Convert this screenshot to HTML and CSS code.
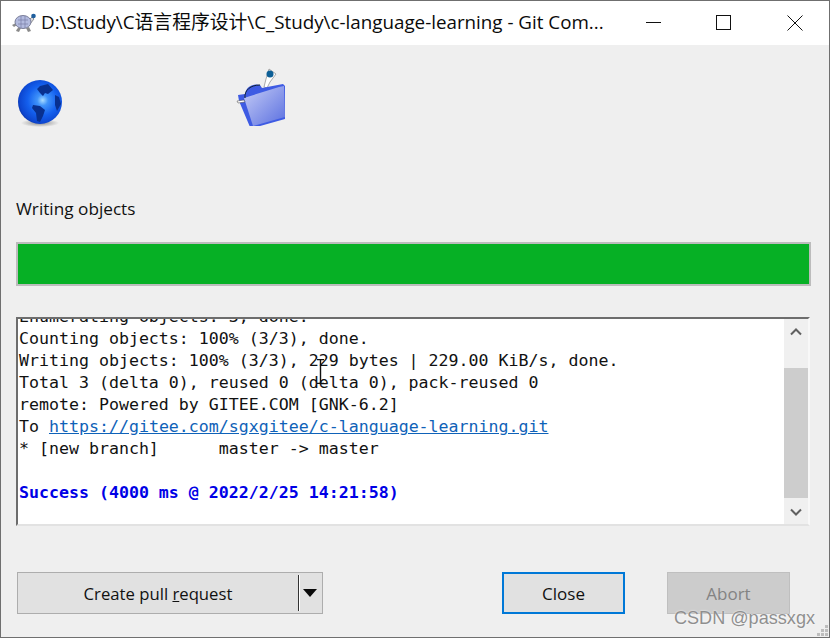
FILE: index.html
```html
<!DOCTYPE html>
<html lang="en">
<head>
<meta charset="utf-8">
<title>Git Command Progress</title>
<link rel="stylesheet" href="styles.css">
</head>
<body>
<div class="window">
  <header class="titlebar">
    <svg class="app-icon" width="24" height="20" viewBox="0 0 24 20">
      <path d="M0 12l4-2 1 2-3 2zM5 16l2-2 2 1-2 4-3-1zM14 15l3-1 2 4-3 1z" fill="#8a8a8a"/>
      <path d="M16 8l4-4 2 2-4 5z" fill="#d8d8de" stroke="#555" stroke-width=".6"/>
      <ellipse cx="11" cy="9" rx="8" ry="6.500" fill="#b3bbdf" stroke="#7b7f9a"/>
      <path d="M6 7h10M6 11h10M9 3v12M13 3v12" stroke="#7a80a6" stroke-width=".7"/>
      <circle cx="21.500" cy="3" r="2.300" fill="#1f5f9e"/>
    </svg>
    <span class="title">D:\Study\C语言程序设计\C_Study\c-language-learning - Git Com...</span>
    <div class="controls">
      <svg width="16" height="16" viewBox="0 0 16 16"><path d="M1 7.500h15" stroke="#111" fill="none"/></svg>
      <svg width="16" height="16" viewBox="0 0 16 16"><rect x=".5" y=".5" width="14" height="14" stroke="#111" fill="none"/></svg>
      <svg width="16" height="16" viewBox="0 0 16 16"><path d="M.5.5l15 15M15.500.5l-15 15" stroke="#111" fill="none"/></svg>
    </div>
  </header>
  <main class="content">
    <div class="icons">
      <svg class="globe" width="48" height="50" viewBox="0 0 48 50">
        <defs>
          <radialGradient id="g1" cx=".56" cy=".46" r=".62">
            <stop offset="0" stop-color="#a8dcff"/><stop offset=".2" stop-color="#3f93fa"/>
            <stop offset=".55" stop-color="#1460ee"/><stop offset=".85" stop-color="#0c45cf"/><stop offset="1" stop-color="#08288c"/>
          </radialGradient>
          <radialGradient id="g2"><stop offset="0" stop-color="#8c8c8c"/><stop offset="1" stop-color="#eee"/></radialGradient>
          <linearGradient id="f1" x1="0" y1="0" x2="1" y2="1">
            <stop offset="0" stop-color="#c6cdf6"/><stop offset="1" stop-color="#5a6fe0"/>
          </linearGradient>
        </defs>
        <ellipse cx="24" cy="45" rx="19" ry="4" fill="url(#g2)"/>
        <circle cx="24" cy="24" r="22" fill="url(#g1)"/>
        <path d="M24 8l8-2 5 6-5 4-3-1-2 3-3-3-3-4zM17 27l7 1 5 4-2 6-3 6-3-1-1-8-4-5zM39 17l4 2 2 7-4 7-2-6z" fill="#08308f"/>
      </svg>
      <svg class="folder" width="50" height="58" viewBox="0 0 50 58">
        <path d="M33 1l7 5-6 8-3 6-3-1 2-8z" fill="#fff" stroke="#777" stroke-width=".6"/>
        <circle cx="34" cy="6" r="3.500" fill="#0d5f96"/>
        <path d="M2 27l7-1c1-8 9-11 15-9l2 3 21-4 2 2v33l-32 9-3-1-11-26z" fill="#3e5be3"/>
        <path d="M8 30l35-11 5-1 1 31-32 9z" fill="url(#f1)"/>
        <path d="M9 30c-1-8 6-13 15-13" stroke="#123" fill="none"/>
        <path d="M1 33l7-1 1 2-7 1z" fill="#fff" stroke="#444" stroke-width=".5"/>
      </svg>
    </div>
    <div class="status">Writing objects</div>
    <div class="progress"></div>
    <section class="log">
      <div class="log-text">
        <div class="line">Enumerating objects: 3, done.</div>
        <div class="line">Counting objects: 100% (3/3), done.</div>
        <div class="line">Writing objects: 100% (3/3), 229 bytes | 229.00 KiB/s, done.</div>
        <div class="line">Total 3 (delta 0), reused 0 (delta 0), pack-reused 0</div>
        <div class="line">remote: Powered by GITEE.COM [GNK-6.2]</div>
        <div class="line">To <a class="link" href="#">https://gitee.com/sgxgitee/c-language-learning.git</a></div>
        <div class="line">* [new branch]      master -&gt; master</div>
        <div class="line">&nbsp;</div>
        <div class="line success">Success (4000 ms @ 2022/2/25 14:21:58)</div>
      </div>
      <div class="scrollbar">
        <svg class="arrow arrow-up" width="12" height="8" viewBox="0 0 12 8"><path d="M1 6.500l5-5 5 5" fill="none" stroke="#606060" stroke-width="2"/></svg>
        <div class="track"><div class="thumb"></div></div>
        <svg class="arrow arrow-down" width="12" height="8" viewBox="0 0 12 8"><path d="M1 1.500l5 5 5-5" fill="none" stroke="#606060" stroke-width="2"/></svg>
      </div>
      <svg class="ibeam" width="9" height="25" viewBox="0 0 9 25"><path d="M1 .5h7M1 24.500h7M4.500 1v23" stroke="#111" stroke-width="1.400" fill="none"/></svg>
    </section>
    <footer class="footer">
      <div class="btn split">
        <span class="split-label">Create pull <u>r</u>equest</span>
        <span class="split-sep"></span>
        <svg class="split-arrow" width="14" height="8" viewBox="0 0 14 8"><path d="M0 0h14L7 8z" fill="#0a0a0a"/></svg>
      </div>
      <div class="footer-right">
        <div class="btn default">Close</div>
        <div class="btn disabled">Abort</div>
      </div>
    </footer>
  </main>
  <div class="watermark">CSDN @passxgx</div>
  <svg class="grip" width="11" height="11" viewBox="0 0 11 11"><path d="M8 0h3v3H8zM4 4h3v3H4zM8 4h3v3H8zM0 8h3v3H0zM4 8h3v3H4zM8 8h3v3H8z" fill="#bdbdbd"/></svg>
</div>
</body>
</html>
```
FILE: styles.css
```css
html, body {
  margin: 0;
  padding: 0;
}
body {
  width: 830px;
  height: 638px;
  overflow: hidden;
  font-family: "Open Sans", "Noto Sans CJK SC", sans-serif;
  color: #111;
}
.window {
  position: relative;
  box-sizing: border-box;
  width: 830px;
  height: 638px;
  border: 1px solid #6f6f6f;
  background: #efefef;
  display: flex;
  flex-direction: column;
}
.titlebar {
  height: 44px;
  background: #fff;
  display: flex;
  align-items: center;
  padding-left: 11px;
  flex: none;
}
.app-icon {
  flex: none;
  margin-right: 5px;
}
.title {
  font-size: 18.800px;
  line-height: 24px;
  margin-top: -2px;
  white-space: nowrap;
  width: 570px;
  overflow: hidden;
  color: #0a0a0a;
}
.controls {
  margin-left: auto;
  display: flex;
  gap: 55px;
  padding-right: 26px;
}
.content {
  flex: 1;
  display: flex;
  flex-direction: column;
  padding: 0 18px 0 15px;
  min-height: 0;
}
.icons {
  height: 106px;
  position: relative;
  display: grid;
  grid-template-columns: 220px 50px;
  align-items: start;
}
.globe {
  margin-top: 33px;
}
.folder {
  margin-top: 23px;
}
.status {
  font-size: 17.200px;
  line-height: 22px;
  margin-top: 47px;
}
.progress {
  box-sizing: border-box;
  height: 44px;
  margin-top: 22px;
  width: 795px;
  background: #06b025;
  border: 2px solid #bcbcbc;
}
.log {
  position: relative;
  box-sizing: border-box;
  width: 794px;
  height: 209px;
  margin-top: 31px;
  background: #fff;
  border-style: solid;
  border-width: 2px 2px 2px 2px;
  border-color: #6d6d6d #f8f8f8 #e2e2e2 #6d6d6d;
  display: flex;
  overflow: hidden;
}
.log-text {
  flex: 1;
  min-width: 0;
  display: flex;
  flex-direction: column;
  justify-content: flex-end;
  padding: 0 0 20px 1px;
  font-family: "DejaVu Sans Mono", monospace;
  font-size: 16.600px;
  line-height: 22px;
  color: #111;
}
.line {
  white-space: pre;
  flex: none;
}
.link {
  color: #0f62b8;
}
.success {
  color: #0000e6;
  font-weight: bold;
}
.scrollbar {
  width: 24px;
  flex: none;
  background: #f0f0f0;
  display: flex;
  flex-direction: column;
  align-items: center;
}
.arrow {
  flex: none;
}
.arrow-up {
  margin: 9px 0;
}
.arrow-down {
  margin: 10px 0 8px;
}
.track {
  flex: 1;
  width: 100%;
  display: flex;
  align-items: flex-end;
}
.thumb {
  width: 100%;
  height: 130px;
  background: #cdcdcd;
}
.ibeam {
  position: absolute;
  left: 298px;
  top: 40px;
}
.footer {
  display: flex;
  justify-content: space-between;
  margin-top: 46px;
  padding-left: 1px;
  width: 773px;
}
.footer-right {
  display: flex;
  gap: 42px;
}
.btn {
  box-sizing: border-box;
  height: 42px;
  width: 123px;
  display: flex;
  align-items: center;
  justify-content: center;
  font-size: 17px;
  background: #e1e1e1;
  border: 1px solid #adadad;
  color: #111;
}
.split {
  width: 306px;
  justify-content: flex-start;
  font-size: 16.700px;
}
.split-label {
  width: 280px;
  text-align: center;
  flex: none;
}
.split-sep {
  width: 1px;
  height: 36px;
  background: #333;
  border-right: 1px solid #fff;
  flex: none;
}
.split-arrow {
  margin-left: 3px;
  flex: none;
}
.default {
  border: 2px solid #0078d7;
}
.disabled {
  background: #cccccc;
  border-color: #bfbfbf;
  color: #838383;
}
.watermark {
  position: absolute;
  right: 14px;
  bottom: 9px;
  font-family: "Liberation Sans", sans-serif;
  font-size: 18.100px;
  line-height: 20px;
  color: #8f8f8f;
  text-shadow: 0 0 2px #fff;
}
.grip {
  position: absolute;
  right: 1px;
  bottom: 1px;
}
```
